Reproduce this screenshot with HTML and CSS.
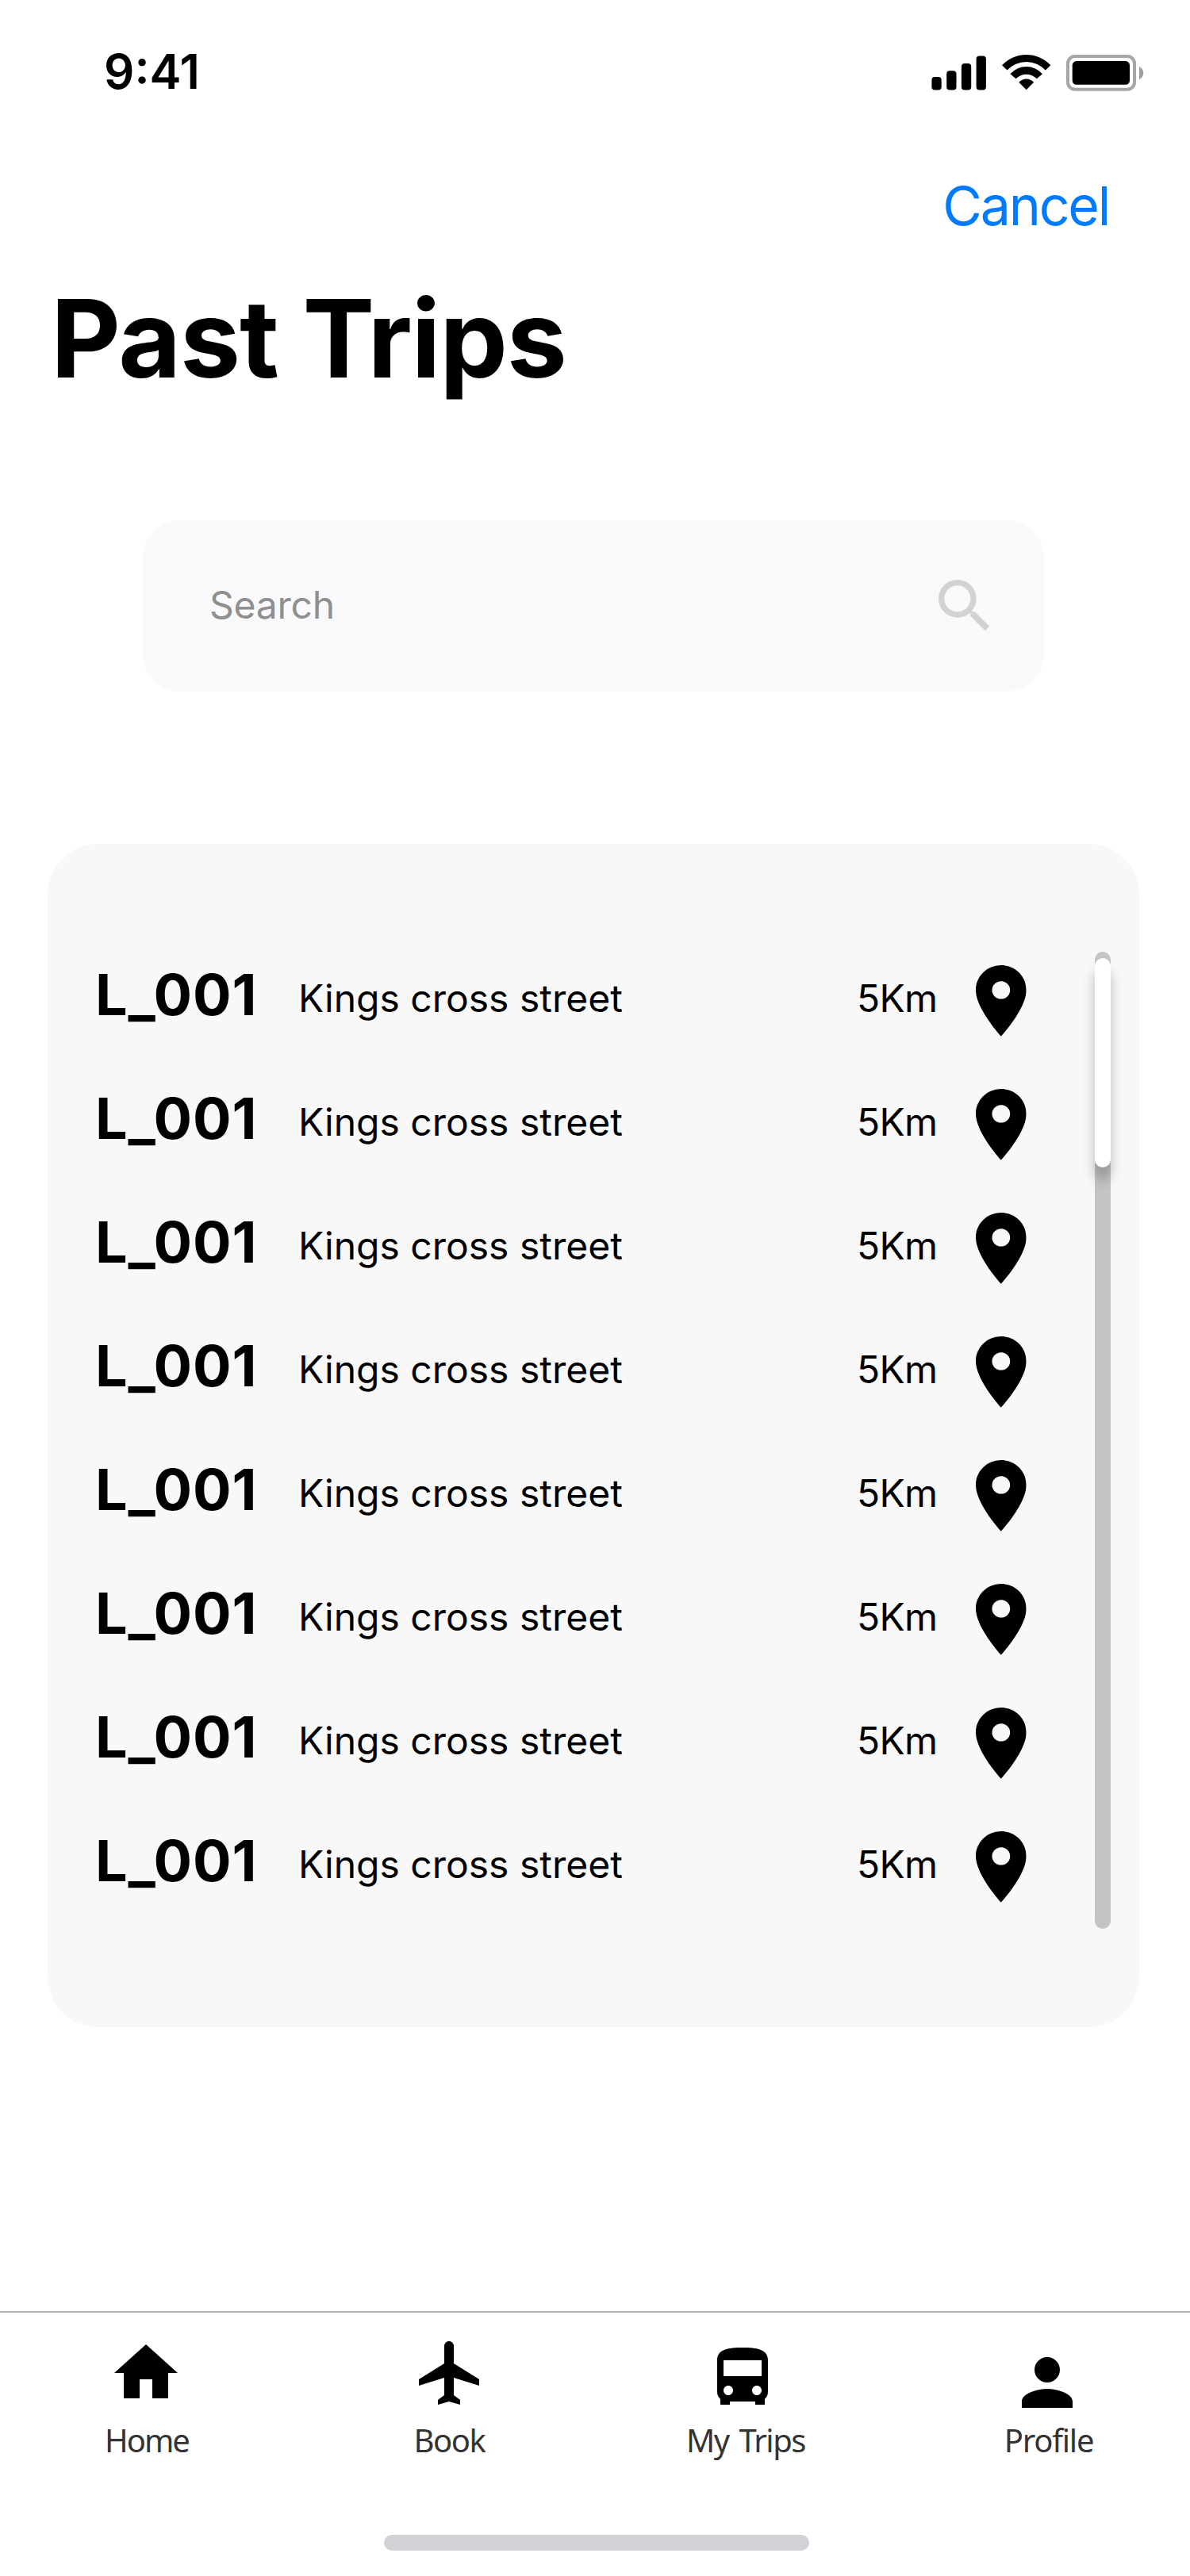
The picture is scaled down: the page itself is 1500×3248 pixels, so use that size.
FILE: index.html
```html
<!DOCTYPE html>
<html lang="en">
<head>
<meta charset="utf-8">
<title>Past Trips</title>
<link rel="stylesheet" href="styles.css">
</head>
<body>
<svg class="defs" aria-hidden="true">
  <symbol id="pin" viewBox="5 2 14 20" preserveAspectRatio="none"><path d="M12 2C8.13 2 5 5.13 5 9c0 5.25 7 13 7 13s7-7.75 7-13c0-3.87-3.13-7-7-7zm0 9.5c-1.38 0-2.5-1.12-2.5-2.5s1.12-2.5 2.5-2.5 2.5 1.12 2.5 2.5-1.12 2.5-2.5 2.5z"/></symbol>
</svg>
<div class="screen">
  <header class="status-bar">
    <span class="time">9:41</span>
    <div class="status-icons">
      <svg class="signal" viewBox="0 0 70 46"><rect x="0.4" y="28" width="12.3" height="16.5" rx="4"/><rect x="19.2" y="20.2" width="12.3" height="24.3" rx="4"/><rect x="37.9" y="10.9" width="12.3" height="33.6" rx="4"/><rect x="56.6" y="1.4" width="12.3" height="43.1" rx="4"/></svg>
      <svg class="wifi" viewBox="0 0 62 46"><path d="M0 13.3A42 42 0 0 1 61.4 13.3L54.8 19.4A33 33 0 0 0 6.6 19.4ZM10.4 24.3A27 27 0 0 1 51 24.3L43.8 30.2A18.5 18.5 0 0 0 17.6 30.2ZM21.3 34.8A12.5 12.5 0 0 1 40.1 34.8L30.7 44.2Z"/></svg>
      <svg class="battery" viewBox="0 0 98 46"><rect x="2" y="2" width="84" height="41.7" rx="9" fill="none" stroke="#a6a6a6" stroke-width="4"/><rect x="7.7" y="8" width="72.3" height="29.8" rx="5.3"/><path d="M92 15C95.3 16.6 97.3 19.5 97.3 23S95.3 29.6 92 31.2Z" fill="#a0a0a0"/></svg>
    </div>
  </header>
  <div class="actions"><a class="cancel">Cancel</a></div>
  <h1 class="title">Past Trips</h1>
  <div class="search">
    <span class="search-text">Search</span>
    <svg class="search-icon" viewBox="0 0 24 24"><path d="M15.5 14h-.79l-.28-.27A6.471 6.471 0 0 0 16 9.5 6.5 6.5 0 1 0 9.5 16c1.61 0 3.09-.59 4.23-1.57l.27.28v.79l5 4.99L20.49 19l-4.99-5zm-6 0C7.01 14 5 11.99 5 9.5S7.01 5 9.5 5 14 7.01 14 9.5 11.99 14 9.5 14z"/></svg>
  </div>
  <main class="card">
    <ul class="trips">
      <li class="trip"><b class="trip-id">L_001</b><span class="street">Kings cross street</span><span class="distance">5Km</span><svg class="pin"><use href="#pin"/></svg></li>
      <li class="trip"><b class="trip-id">L_001</b><span class="street">Kings cross street</span><span class="distance">5Km</span><svg class="pin"><use href="#pin"/></svg></li>
      <li class="trip"><b class="trip-id">L_001</b><span class="street">Kings cross street</span><span class="distance">5Km</span><svg class="pin"><use href="#pin"/></svg></li>
      <li class="trip"><b class="trip-id">L_001</b><span class="street">Kings cross street</span><span class="distance">5Km</span><svg class="pin"><use href="#pin"/></svg></li>
      <li class="trip"><b class="trip-id">L_001</b><span class="street">Kings cross street</span><span class="distance">5Km</span><svg class="pin"><use href="#pin"/></svg></li>
      <li class="trip"><b class="trip-id">L_001</b><span class="street">Kings cross street</span><span class="distance">5Km</span><svg class="pin"><use href="#pin"/></svg></li>
      <li class="trip"><b class="trip-id">L_001</b><span class="street">Kings cross street</span><span class="distance">5Km</span><svg class="pin"><use href="#pin"/></svg></li>
      <li class="trip"><b class="trip-id">L_001</b><span class="street">Kings cross street</span><span class="distance">5Km</span><svg class="pin"><use href="#pin"/></svg></li>
    </ul>
    <div class="scrollbar"><div class="thumb"></div></div>
  </main>
  <footer class="tab-bar">
    <nav class="tabs">
      <a class="tab tab-home"><svg viewBox="0 0 24 24"><path d="M10 20v-6h4v6h5v-8h3L12 3 2 12h3v8z"/></svg><span>Home</span></a>
      <a class="tab tab-book"><svg viewBox="0 0 24 24"><path d="M21 16v-2l-8-5V3.5c0-.83-.67-1.5-1.5-1.5S10 2.67 10 3.5V9l-8 5v2l8-2.5V19l-2 1.5V22l3.5-1 3.5 1v-1.5L13 19v-5.5l8 2.5z"/></svg><span>Book</span></a>
      <a class="tab tab-trips"><svg viewBox="0 -2 24 24"><path d="M4 16c0 .88.39 1.67 1 2.22V20h3v-1h8v1h3v-1.78c.61-.55 1-1.34 1-2.22V6c0-3.5-3.58-4-8-4s-8 .5-8 4v10zm3.5 1c-.83 0-1.5-.67-1.5-1.5S6.67 14 7.5 14s1.5.67 1.5 1.5S8.33 17 7.5 17zm9 0c-.83 0-1.5-.67-1.5-1.5s.67-1.5 1.5-1.5 1.5.67 1.5 1.5-.67 1.5-1.5 1.5zM18 11H6V6h12v5z"/></svg><span>My Trips</span></a>
      <a class="tab tab-profile"><svg viewBox="0 -3 24 24"><path d="M12 12c2.21 0 4-1.79 4-4s-1.79-4-4-4-4 1.79-4 4 1.79 4 4 4zm0 2c-2.67 0-8 1.34-8 4v2h16v-2c0-2.66-5.33-4-8-4z"/></svg><span>Profile</span></a>
    </nav>
    <div class="home-indicator"></div>
  </footer>
</div>
</body>
</html>
```
FILE: styles.css
```css
* { box-sizing: border-box; margin: 0; padding: 0; }
body { background: #fff; color: #000; font-family: Inter, "Liberation Sans", sans-serif; }
svg { display: block; overflow: visible; }
.defs { width: 0; height: 0; position: absolute; }
.screen { width: 1500px; height: 3248px; display: flex; flex-direction: column; background: #fff; overflow: hidden; }

.status-bar { height: 176px; padding: 54px 58px 0 131px; display: flex; justify-content: space-between; align-items: flex-start; }
.time { font-size: 60px; line-height: 72px; font-weight: 600; letter-spacing: 0; }
.status-icons { display: flex; margin-top: 15px; }
.signal { width: 70px; height: 46px; }
.wifi { width: 62px; height: 46px; margin-left: 18.7px; }
.battery { width: 98px; height: 46px; margin-left: 19.3px; }

.actions { height: 169px; padding: 39px 102px 0 0; display: flex; justify-content: flex-end; }
.cancel { font-size: 68px; line-height: 88px; color: #007aff; letter-spacing: -2.2px; }

.title { font-size: 136px; line-height: 164px; font-weight: 700; padding-left: 64px; letter-spacing: -1.2px; white-space: nowrap; }

.search { width: 1136px; height: 216px; margin: 147px 0 0 180px; padding: 0 56px 0 84px; border-radius: 48px; background: #f9f9fb; display: flex; align-items: center; justify-content: space-between; }
.search-text { font-size: 48px; line-height: 58px; padding-bottom: 3px; color: #8f8f8f; letter-spacing: -.25px; }
.search-icon { width: 88px; height: 88px; fill: #d2d2d2; }

.card { width: 1376px; height: 1492px; margin: 192px 0 0 60px; padding: 112px 36px 0 60px; border-radius: 64px; background: #f8f8f8; display: flex; justify-content: space-between; }
.trips { list-style: none; width: 1174px; }
.trip { height: 156px; display: grid; grid-template-columns: 256px 704px 150.3px 63.7px; align-items: center; white-space: nowrap; }
.trip-id { font-size: 72px; line-height: 88px; font-weight: 700; letter-spacing: .9px; }
.street, .distance { font-size: 48px; line-height: 58px; padding-top: 9px; }
.distance { letter-spacing: -.7px; }
.pin { width: 63.7px; height: 89.7px; margin-top: 16px; }
.scrollbar { width: 20px; height: 1232px; margin-top: 24px; padding-top: 8px; border-radius: 10px; background: #c4c4c4; }
.thumb { height: 264px; border-radius: 10px; background: #fff; box-shadow: 0 16px 16px rgba(0, 0, 0, .25); }

.tab-bar { margin-top: auto; height: 334px; border-top: 2px solid #b3b3b3; display: flex; flex-direction: column; align-items: center; }
.tabs { align-self: stretch; height: 280px; padding: 28px 80px 0 84px; display: flex; }
.tab { width: 200px; display: flex; flex-direction: column; align-items: center; }
.tab svg { width: 96px; height: 96px; }
.tab span { margin-top: 9px; font-family: "Noto Sans", sans-serif; font-size: 40px; line-height: 56px; color: #333; letter-spacing: -1.5px; white-space: nowrap; }
.tab-book { margin-left: 184px; }
.tab-trips { margin-left: 168px; }
.tab-profile { margin-left: 184px; }
.tab-home span { padding-left: 2px; letter-spacing: -2px; }
.tab-book span { padding-right: 3px; }
.tab-trips span { padding-left: 8px; word-spacing: 4px; }
.tab-profile span { padding-left: 4px; letter-spacing: -1.2px; }
.home-indicator { width: 536px; height: 20px; margin-left: 4px; border-radius: 10px; background: #d1d1d6; }
```
